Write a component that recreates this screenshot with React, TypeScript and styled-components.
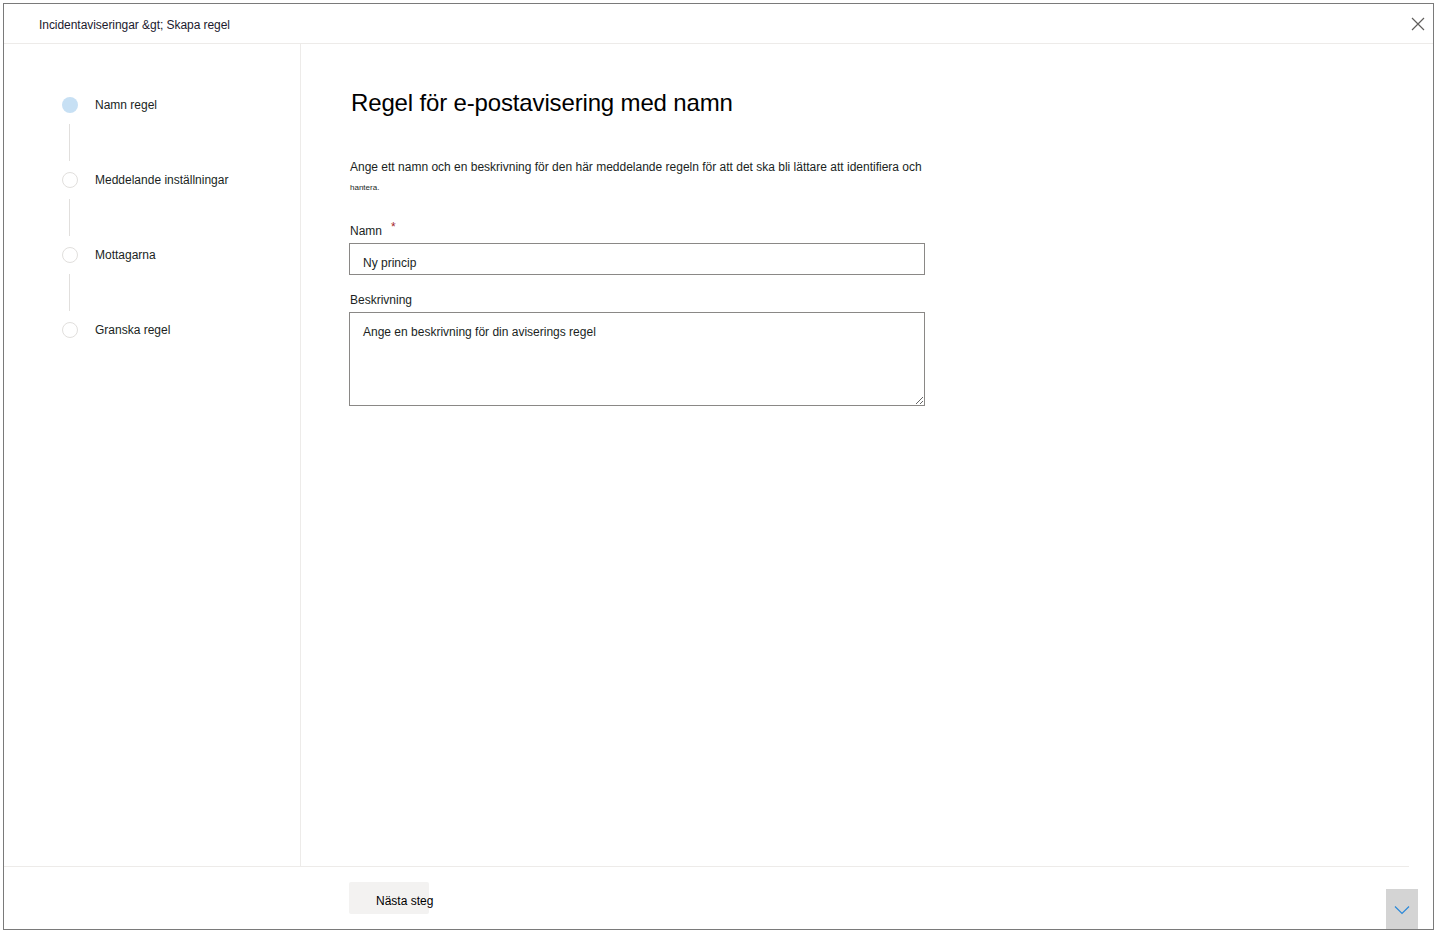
import React from "react";
import styled, { createGlobalStyle } from "styled-components";

const Global = createGlobalStyle`
  html, body { margin: 0; padding: 0; background: #fff; }
  body { font-family: "Liberation Sans", Arial, sans-serif; color: #201f1e; }
  * { box-sizing: border-box; }
`;

const Page = styled.div`
  padding: 3px 9px 3px 3px;
  width: 1443px;
  height: 933px;
`;

const Frame = styled.div`
  position: relative;
  width: 1431px;
  height: 927px;
  border: 1px solid #7a7a7a;
  display: flex;
  flex-direction: column;
  background: #fff;
`;

const Header = styled.header`
  height: 40px;
  flex: none;
  border-bottom: 1px solid #edebe9;
  display: flex;
  align-items: center;
  justify-content: space-between;
  padding: 0 3px 0 35px;
`;

const Breadcrumb = styled.div`
  font-size: 12px;
  margin-top: 2px;
  letter-spacing: -0.05px;
  color: #1b1a2e;
`;

const CloseButton = styled.button`
  border: none;
  background: transparent;
  width: 24px;
  height: 24px;
  padding: 0;
  display: flex;
  align-items: center;
  justify-content: center;
  cursor: pointer;
`;

const Body = styled.div`
  flex: 1;
  display: flex;
  min-height: 0;
`;

const Nav = styled.nav`
  width: 297px;
  flex: none;
  border-right: 1px solid #edebe9;
  padding: 53px 0 0 58px;
  display: flex;
  flex-direction: column;
`;

const StepRow = styled.div`
  display: flex;
  align-items: center;
  height: 16px;
  gap: 17px;
`;

const StepDot = styled.span<{ $active?: boolean }>`
  width: 16px;
  height: 16px;
  border-radius: 50%;
  flex: none;
  background: ${(p) => (p.$active ? "#c7e0f4" : "#fff")};
  border: ${(p) => (p.$active ? "none" : "1px solid #e1dfdd")};
`;

const StepLabel = styled.span`
  font-size: 12px;
  color: #201f1e;
`;

const Connector = styled.span`
  width: 1px;
  height: 37px;
  margin: 11px 0 11px 7px;
  background: #e1dfdd;
`;

const Main = styled.main`
  flex: 1;
  padding: 43px 0 0 48px;
  display: flex;
  flex-direction: column;
`;

const Title = styled.h1`
  margin: 0 0 0 2px;
  font-size: 24px;
  line-height: 32px;
  font-weight: 400;
  color: #000;
  letter-spacing: -0.15px;
`;

const Description = styled.p`
  margin: 38px 0 0 1px;
  font-size: 12px;
  line-height: 20px;
  color: #201f1e;
`;

const Small = styled.span`
  font-size: 8px;
  line-height: 22px;
  display: block;
`;

const Field = styled.div<{ $top: number }>`
  display: flex;
  flex-direction: column;
  margin-top: ${(p) => p.$top}px;
  width: 576px;
`;

const Label = styled.label`
  font-size: 12px;
  line-height: 16px;
  margin: 0 0 4px 1px;
  color: #201f1e;
  display: flex;
  align-items: flex-start;
`;

const Required = styled.span`
  color: #a4262c;
  font-size: 12px;
  margin-left: 9px;
  margin-top: -4px;
`;

const TextInput = styled.input`
  width: 576px;
  height: 32px;
  border: 1px solid #8a8886;
  border-radius: 0;
  padding: 7px 13px 0;
  font-family: "Liberation Sans", Arial, sans-serif;
  font-size: 12px;
  color: #201f1e;
  outline: none;
`;

const TextArea = styled.textarea`
  width: 576px;
  height: 94px;
  border: 1px solid #8a8886;
  border-radius: 0;
  padding: 11px 13px;
  font-family: "Liberation Sans", Arial, sans-serif;
  font-size: 12px;
  line-height: 16px;
  color: #201f1e;
  outline: none;
  resize: vertical;
  &::placeholder { color: #201f1e; opacity: 1; }
`;

const Footer = styled.footer`
  height: 63px;
  flex: none;
  margin-right: 24px;
  border-top: 1px solid #edebe9;
  padding: 15px 0 0 345px;
`;

const PrimaryButton = styled.button`
  width: 80px;
  height: 32px;
  border: none;
  border-radius: 2px;
  background: #f3f2f1;
  font-family: "Liberation Sans", Arial, sans-serif;
  font-size: 12px;
  color: #000;
  padding: 6px 0 0 27px;
  text-align: left;
  white-space: nowrap;
  overflow: visible;
  cursor: pointer;
`;

const ScrollButton = styled.button`
  position: absolute;
  right: 15px;
  bottom: 0;
  width: 32px;
  height: 40px;
  border: none;
  background: #d4d4d4;
  display: flex;
  align-items: center;
  justify-content: center;
  padding: 2px 0 0;
  cursor: pointer;
`;

const steps = ["Namn regel", "Meddelande inställningar", "Mottagarna", "Granska regel"];

export default function App() {
  return (
    <>
      <Global />
      <Page>
        <Frame>
          <Header>
            <Breadcrumb>Incidentaviseringar &amp;gt; Skapa regel</Breadcrumb>
            <CloseButton aria-label="Stäng">
              <svg width="14" height="14" viewBox="0 0 14 14">
                <path d="M1 1 L13 13 M13 1 L1 13" stroke="#605e5c" strokeWidth="1.2" fill="none" />
              </svg>
            </CloseButton>
          </Header>
          <Body>
            <Nav>
              {steps.map((s, i) => (
                <React.Fragment key={s}>
                  <StepRow>
                    <StepDot $active={i === 0} />
                    <StepLabel>{s}</StepLabel>
                  </StepRow>
                  {i < steps.length - 1 && <Connector />}
                </React.Fragment>
              ))}
            </Nav>
            <Main>
              <Title>Regel för e-postavisering med namn</Title>
              <Description>
                Ange ett namn och en beskrivning för den här meddelande regeln för att det ska bli lättare att identifiera och
                <Small>hantera.</Small>
              </Description>
              <Field $top={24}>
                <Label>
                  Namn<Required>*</Required>
                </Label>
                <TextInput defaultValue="Ny princip" />
              </Field>
              <Field $top={17}>
                <Label>Beskrivning</Label>
                <TextArea placeholder="Ange en beskrivning för din aviserings regel" />
              </Field>
            </Main>
          </Body>
          <Footer>
            <PrimaryButton>Nästa steg</PrimaryButton>
          </Footer>
          <ScrollButton aria-label="Rulla ned">
            <svg width="16" height="10" viewBox="0 0 16 10">
              <path d="M1 1.5 L8 8.5 L15 1.5" stroke="#2b88d8" strokeWidth="1.2" fill="none" />
            </svg>
          </ScrollButton>
        </Frame>
      </Page>
    </>
  );
}
